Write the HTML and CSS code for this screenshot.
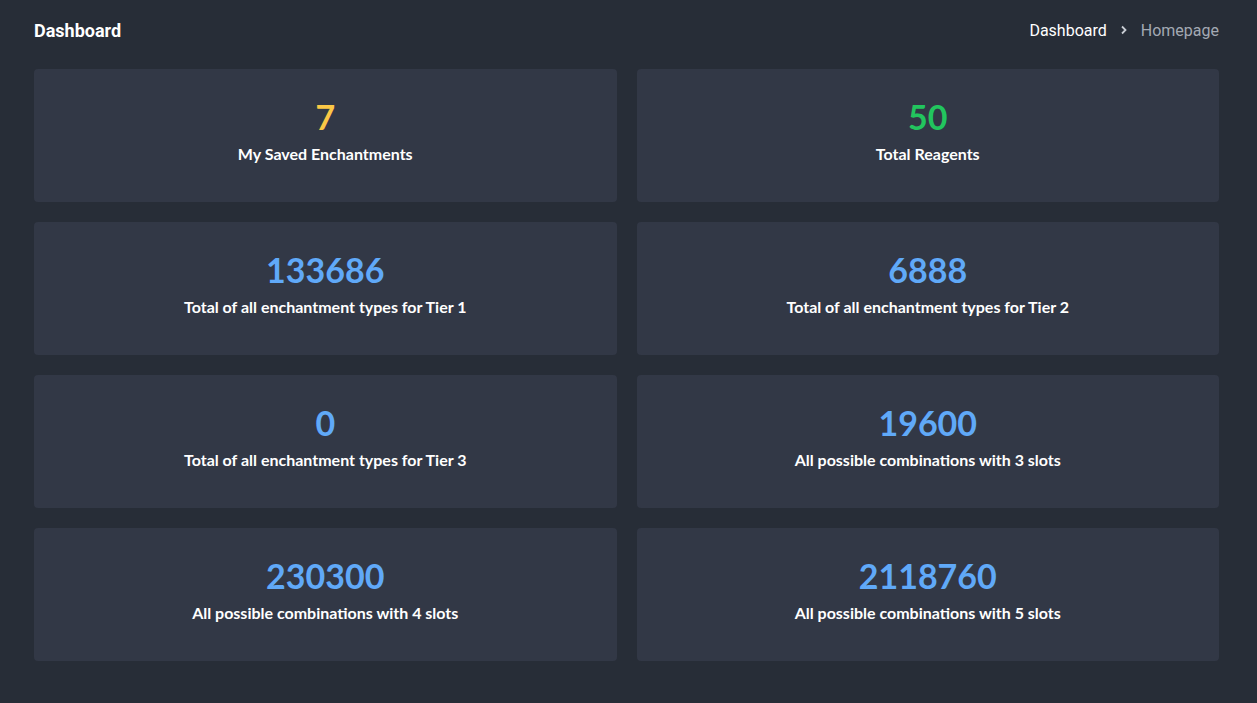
FILE: index.html
```html
<!DOCTYPE html>
<html lang="en">
<head>
    <meta charset="UTF-8">
    <meta name="viewport" content="width=device-width, initial-scale=1.0">
    <title>Dashboard</title>
    <link rel="stylesheet" href="styles.css">
</head>
<body>
    <div class="page">
        <div class="page-header">
            <h1>Dashboard</h1>
            <div class="breadcrumb">
                <span class="crumb">Dashboard</span>
                <svg class="chevron" width="8" height="10" viewBox="0 0 8 10"><path d="M2 1.5 L5.5 5 L2 8.5" fill="none" stroke="#c9cdd4" stroke-width="1.8"/></svg>
                <span class="crumb current">Homepage</span>
            </div>
        </div>

        <div class="stats">
            <div class="stat-card">
                <div class="stat-value yellow">7</div>
                <div class="stat-label">My Saved Enchantments</div>
            </div>
            <div class="stat-card">
                <div class="stat-value green">50</div>
                <div class="stat-label">Total Reagents</div>
            </div>
            <div class="stat-card">
                <div class="stat-value blue">133686</div>
                <div class="stat-label">Total of all enchantment types for Tier 1</div>
            </div>
            <div class="stat-card">
                <div class="stat-value blue">6888</div>
                <div class="stat-label">Total of all enchantment types for Tier 2</div>
            </div>
            <div class="stat-card">
                <div class="stat-value blue">0</div>
                <div class="stat-label">Total of all enchantment types for Tier 3</div>
            </div>
            <div class="stat-card">
                <div class="stat-value blue">19600</div>
                <div class="stat-label">All possible combinations with 3 slots</div>
            </div>
            <div class="stat-card">
                <div class="stat-value blue">230300</div>
                <div class="stat-label">All possible combinations with 4 slots</div>
            </div>
            <div class="stat-card">
                <div class="stat-value blue">2118760</div>
                <div class="stat-label">All possible combinations with 5 slots</div>
            </div>
        </div>
    </div>
</body>
</html>
```

FILE: styles.css
```css
body {
    margin: 0;
    background-color: #272d37;
    font-family: Roboto, "Liberation Sans", sans-serif;
    color: #ffffff;
}

.page {
    padding: 18px 38px 40px 34px;
}

.page-header {
    display: flex;
    justify-content: space-between;
    align-items: center;
    height: 24px;
    margin-bottom: 27px;
}

.page-header h1 {
    margin: 0;
    font-size: 18px;
    font-weight: 700;
}

.breadcrumb {
    display: flex;
    align-items: center;
    gap: 13px;
    font-size: 16px;
}

.crumb.current {
    color: #a3a9b3;
}

.stats {
    display: grid;
    grid-template-columns: 1fr 1fr;
    gap: 20px;
}

.stat-card {
    background: #323846;
    border-radius: 4px;
    height: 133px;
    display: flex;
    flex-direction: column;
    align-items: center;
    padding-top: 29px;
    box-sizing: border-box;
    font-family: Lato, "Noto Sans", sans-serif;
}

.stat-value {
    font-size: 34px;
    font-weight: 700;
    line-height: 38px;
}

.stat-label {
    margin-top: 8px;
    font-size: 16px;
    font-weight: 700;
    line-height: 20px;
}

.yellow { color: #fbc846; }
.green { color: #22c55e; }
.blue { color: #60a9f8; }
```
